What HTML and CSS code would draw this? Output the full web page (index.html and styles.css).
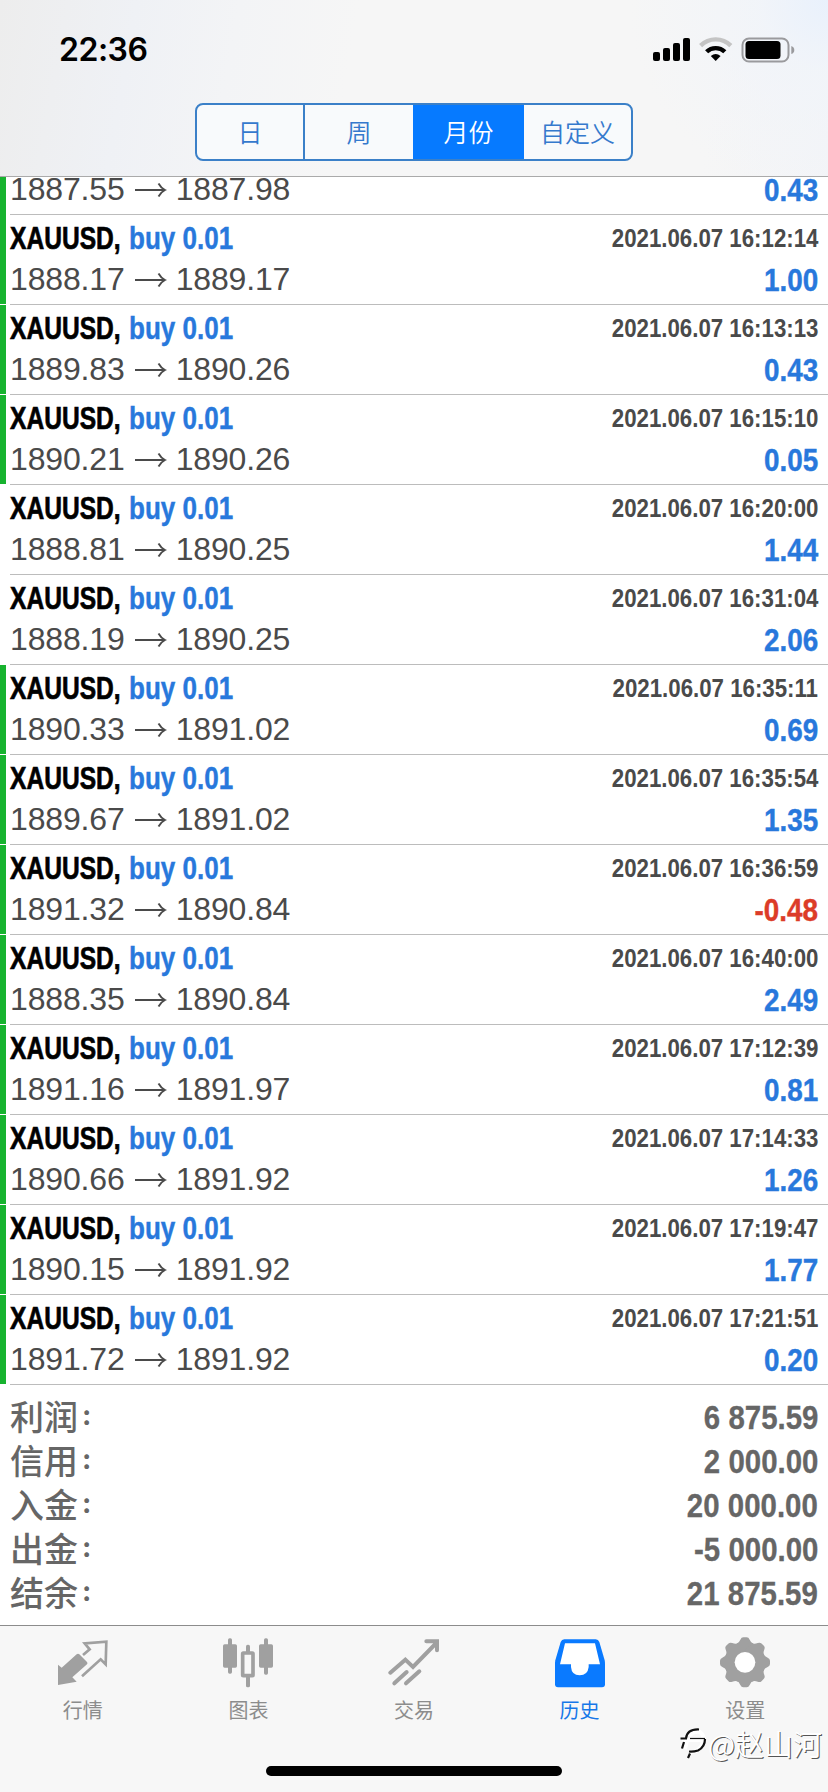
FILE: index.html
```html
<!DOCTYPE html>
<html lang="zh-CN">
<head>
<meta charset="utf-8">
<title>历史</title>
<link rel="stylesheet" href="styles.css">
</head>
<body>
<div class="screen">
  <header class="header">
    <div class="status">
      <span class="clock">22:36</span>
      <svg class="status-icons" width="142" height="26" viewBox="0 0 142 26">
        <rect x="0" y="15" width="7" height="9" rx="2"/>
        <rect x="10" y="11" width="7" height="13" rx="2"/>
        <rect x="20" y="6" width="7" height="18" rx="2"/>
        <rect x="30" y="1" width="7" height="23" rx="2"/>
        <g fill="none">
          <path d="M47.6 8.6 A21.5 21.5 0 0 1 77.8 8.6" stroke="#c4c4c4" stroke-width="4.4"/>
          <path d="M53.6 14.8 A13 13 0 0 1 71.8 14.8" stroke="#000" stroke-width="4.4"/>
        </g>
        <path d="M57.8 19 Q62.7 15.2 67.6 19 L62.7 24 Z"/>
        <rect x="89.5" y="1.5" width="46" height="23" rx="6.5" fill="none" stroke="#9a9a9d" stroke-width="2"/>
        <rect x="92.500" y="4" width="35" height="18" rx="3.500"/>
        <path d="M138.300 9 Q141.300 10 141.300 13 T138.300 17 Z" fill="#9a9a9d"/>
      </svg>
    </div>
    <nav class="segments">
      <span class="segment">日</span>
      <span class="segment">周</span>
      <span class="segment segment-on">月份</span>
      <span class="segment">自定义</span>
    </nav>
  </header>

  <svg class="defs" width="0" height="0">
    <symbol id="arrow" viewBox="0 0 32 16"><path d="M0 8H30M23.500 1.500Q26 6 30 8Q26 10 23.500 14.500" fill="none" stroke="#4a4a4a" stroke-width="1.900"/></symbol>
  </svg>

  <main class="deals">
    <div class="deal open deal-cut"><div class="line"><span class="prices">1887.55<svg class="arrow"><use href="#arrow"/></svg>1887.98</span><b class="value">0.43</b></div></div>
    <div class="deal open"><div class="line"><b class="symbol">XAUUSD,</b><b class="side">buy 0.01</b><b class="date">2021.06.07 16:12:14</b></div><div class="line"><span class="prices">1888.17<svg class="arrow"><use href="#arrow"/></svg>1889.17</span><b class="value">1.00</b></div></div>
    <div class="deal open"><div class="line"><b class="symbol">XAUUSD,</b><b class="side">buy 0.01</b><b class="date">2021.06.07 16:13:13</b></div><div class="line"><span class="prices">1889.83<svg class="arrow"><use href="#arrow"/></svg>1890.26</span><b class="value">0.43</b></div></div>
    <div class="deal open"><div class="line"><b class="symbol">XAUUSD,</b><b class="side">buy 0.01</b><b class="date">2021.06.07 16:15:10</b></div><div class="line"><span class="prices">1890.21<svg class="arrow"><use href="#arrow"/></svg>1890.26</span><b class="value">0.05</b></div></div>
    <div class="deal"><div class="line"><b class="symbol">XAUUSD,</b><b class="side">buy 0.01</b><b class="date">2021.06.07 16:20:00</b></div><div class="line"><span class="prices">1888.81<svg class="arrow"><use href="#arrow"/></svg>1890.25</span><b class="value">1.44</b></div></div>
    <div class="deal"><div class="line"><b class="symbol">XAUUSD,</b><b class="side">buy 0.01</b><b class="date">2021.06.07 16:31:04</b></div><div class="line"><span class="prices">1888.19<svg class="arrow"><use href="#arrow"/></svg>1890.25</span><b class="value">2.06</b></div></div>
    <div class="deal open"><div class="line"><b class="symbol">XAUUSD,</b><b class="side">buy 0.01</b><b class="date">2021.06.07 16:35:11</b></div><div class="line"><span class="prices">1890.33<svg class="arrow"><use href="#arrow"/></svg>1891.02</span><b class="value">0.69</b></div></div>
    <div class="deal open"><div class="line"><b class="symbol">XAUUSD,</b><b class="side">buy 0.01</b><b class="date">2021.06.07 16:35:54</b></div><div class="line"><span class="prices">1889.67<svg class="arrow"><use href="#arrow"/></svg>1891.02</span><b class="value">1.35</b></div></div>
    <div class="deal open"><div class="line"><b class="symbol">XAUUSD,</b><b class="side">buy 0.01</b><b class="date">2021.06.07 16:36:59</b></div><div class="line"><span class="prices">1891.32<svg class="arrow"><use href="#arrow"/></svg>1890.84</span><b class="value loss">-0.48</b></div></div>
    <div class="deal open"><div class="line"><b class="symbol">XAUUSD,</b><b class="side">buy 0.01</b><b class="date">2021.06.07 16:40:00</b></div><div class="line"><span class="prices">1888.35<svg class="arrow"><use href="#arrow"/></svg>1890.84</span><b class="value">2.49</b></div></div>
    <div class="deal open"><div class="line"><b class="symbol">XAUUSD,</b><b class="side">buy 0.01</b><b class="date">2021.06.07 17:12:39</b></div><div class="line"><span class="prices">1891.16<svg class="arrow"><use href="#arrow"/></svg>1891.97</span><b class="value">0.81</b></div></div>
    <div class="deal open"><div class="line"><b class="symbol">XAUUSD,</b><b class="side">buy 0.01</b><b class="date">2021.06.07 17:14:33</b></div><div class="line"><span class="prices">1890.66<svg class="arrow"><use href="#arrow"/></svg>1891.92</span><b class="value">1.26</b></div></div>
    <div class="deal open"><div class="line"><b class="symbol">XAUUSD,</b><b class="side">buy 0.01</b><b class="date">2021.06.07 17:19:47</b></div><div class="line"><span class="prices">1890.15<svg class="arrow"><use href="#arrow"/></svg>1891.92</span><b class="value">1.77</b></div></div>
    <div class="deal open"><div class="line"><b class="symbol">XAUUSD,</b><b class="side">buy 0.01</b><b class="date">2021.06.07 17:21:51</b></div><div class="line"><span class="prices">1891.72<svg class="arrow"><use href="#arrow"/></svg>1891.92</span><b class="value">0.20</b></div></div>
  </main>

  <section class="summary">
    <div class="total"><span class="label">利润<i class="colon">:</i></span><b class="amount">6 875.59</b></div>
    <div class="total"><span class="label">信用<i class="colon">:</i></span><b class="amount">2 000.00</b></div>
    <div class="total"><span class="label">入金<i class="colon">:</i></span><b class="amount">20 000.00</b></div>
    <div class="total"><span class="label">出金<i class="colon">:</i></span><b class="amount">-5 000.00</b></div>
    <div class="total"><span class="label">结余<i class="colon">:</i></span><b class="amount">21 875.59</b></div>
  </section>

  <footer class="tabs">
    <div class="tab">
      <svg class="icon" viewBox="0 0 156 156"><path d="M3 83L14 92L59 52Q63 48 67 52L90 75Q93 79 90 82L46 121L59 134L3 144Z" fill="#a0a0a0"/><path d="M78 54L98 37L83 19L148 14L146 82L131 67L75 118" fill="none" stroke="#a0a0a0" stroke-width="8"/></svg>
      <span>行情</span>
    </div>
    <div class="tab">
      <svg class="icon" viewBox="0 0 156 156"><g fill="#a0a0a0"><rect x="3" y="22" width="42" height="70" rx="5"/><rect x="18" y="4" width="12" height="106" rx="5"/><rect x="111" y="22" width="42" height="70" rx="5"/><rect x="126" y="4" width="12" height="109" rx="5"/><rect x="72" y="23" width="12" height="26" rx="5"/><rect x="72" y="116" width="12" height="35" rx="5"/></g><rect x="62" y="48" width="31" height="68" rx="2" fill="none" stroke="#a0a0a0" stroke-width="11"/></svg>
      <span>图表</span>
    </div>
    <div class="tab">
      <svg class="icon" viewBox="0 0 156 156"><g fill="none" stroke="#a0a0a0" stroke-width="12" stroke-linecap="round" stroke-linejoin="miter"><path d="M7 107L52 68L75 90L145 18M115 13H147V40"/><path d="M19 139L56 105M54 139L94 103"/></g></svg>
      <span>交易</span>
    </div>
    <div class="tab tab-on">
      <svg class="icon" viewBox="0 0 156 156"><path d="M31 7H125Q133 7 136 15L152 70Q153 75 153 80V142Q153 151 144 151H12Q3 151 3 142V80Q3 75 4 70L20 15Q23 7 31 7Z" fill="#0a7aff"/><path d="M33 19H123L138 82H104V90Q101 115 77 115T51 90V82H18Z" fill="#fff"/></svg>
      <span>历史</span>
    </div>
    <div class="tab">
      <svg class="icon" viewBox="0 0 156 156"><g transform="translate(78 76)"><g fill="#a0a0a0"><circle r="61"/><path id="tooth" d="M-25 -56Q-18 -58 -14 -68Q-11 -75 -5 -75H5Q11 -75 14 -68Q18 -58 25 -56V56Q18 58 14 68Q11 75 5 75H-5Q-11 75 -14 68Q-18 58 -25 56Z"/><use href="#tooth" transform="rotate(45)"/><use href="#tooth" transform="rotate(90)"/><use href="#tooth" transform="rotate(135)"/></g><circle r="31" fill="#fff"/></g></svg>
      <span>设置</span>
    </div>
    <div class="home"></div>
    <div class="mark">
      <svg width="28" height="32" viewBox="0 0 28 32"><g fill="none" stroke="#fff" stroke-width="4"><path d="M3 13H25M8 14L6 22M10 9Q14 4 21 5Q26 9 24 15Q22 24 11 26"/></g><g fill="none" stroke="#111"><path d="M1.500 11.500H7Q8 2 20 2.500M5 15L3 21.500M26 12Q26 20 19 23.500Q14 25 10 24.500M11 26.500L9 31" stroke-width="2.200"/><path d="M11 11.500H26" stroke-width="1.200"/></g></svg>
      <span>@赵山河</span>
    </div>
  </footer>
</div>
</body>
</html>
```
FILE: styles.css
```css
* { box-sizing: border-box; }
body { margin: 0; background: #fff; font-family: "Liberation Sans", "Noto Sans CJK SC", sans-serif; }
.screen { width: 828px; height: 1792px; display: flex; flex-direction: column; overflow: hidden; }
.defs { position: absolute; }

.header {
  height: 177px;
  flex: none;
  border-bottom: 1px solid #aaa;
  background:
    radial-gradient(circle at 100% 0, #e9f1fc 0, rgba(240, 244, 250, .7) 70px, rgba(246, 246, 246, 0) 200px),
    linear-gradient(100deg, #ededed 0, #eff1f5 16%, #f3f4f6 28%, #f6f6f6 42%, #f6f6f6 85%, #f3f4f7 100%);
}
.status { height: 103px; padding: 0 33px 0 59px; display: flex; justify-content: space-between; align-items: flex-start; }
.clock { font: 600 32px/40px Inter, sans-serif; letter-spacing: -.5px; padding-top: 30px; }
.status-icons { margin-top: 37px; }

.segments {
  width: 438px;
  height: 58px;
  margin-left: 195px;
  display: grid;
  grid-template-columns: 106px 110px 109px 1fr;
  border: 2px solid #3b80c8;
  border-radius: 8px;
  overflow: hidden;
  background: #f8fafc;
}
.segment { font: 350 25px/52px "Noto Sans CJK SC", sans-serif; text-align: center; color: #3579cd; border-left: 2px solid #3b80c8; }
.segment:first-child { border-left: 0; }
.segment-on { background: #067aff; color: #fff; border-color: #067aff; }
.segment-on + .segment { border-color: #067aff; }

.deals { flex: none; }
.deal {
  height: 90px;
  padding: 3px 10px 0;
  background: linear-gradient(#bcbcbc, #bcbcbc) 10px 100% / 828px 1px no-repeat;
}
.open {
  background: linear-gradient(#bcbcbc, #bcbcbc) 10px 100% / 828px 1px no-repeat, linear-gradient(#17b32f, #17b32f) 0 0 / 6px 89px no-repeat;
}
.deal-cut { height: 38px; padding: 0 10px; overflow: hidden; }
.deal-cut .line { margin-top: -8px; }
.line { height: 41px; display: flex; font-size: 32px; line-height: 41px; white-space: nowrap; }
.symbol { width: 119px; transform: scaleX(.768); transform-origin: 0 0; -webkit-text-stroke: .7px; }
.side { color: #2878dc; transform: scaleX(.813); transform-origin: 0 0; -webkit-text-stroke: .4px; }
.date { margin-left: auto; font-size: 26px; color: #4a4a4a; transform: scaleX(.856); transform-origin: 100% 0; }
.prices { display: flex; align-items: center; color: #4a4a4a; letter-spacing: -.15px; }
.arrow { width: 32px; height: 16px; margin: 0 9px 0 10px; }
.value { margin-left: auto; padding-top: 1px; color: #2878dc; transform: scaleX(.87); transform-origin: 100% 0; -webkit-text-stroke: .4px; }
.loss { color: #dc3c28; }

.summary { height: 240px; flex: none; padding: 9px 10px 0; color: #666; }
.total { height: 44px; display: flex; justify-content: space-between; line-height: 44px; }
.label { display: flex; font: 500 34px/44px "Noto Sans CJK SC", sans-serif; }
.colon { font: 700 28px/42px Inter, sans-serif; margin-left: 4px; }
.amount { font-size: 33px; padding-top: 2px; transform: scaleX(.892); transform-origin: 100% 0; -webkit-text-stroke: .3px; }

.tabs { position: relative; flex: 1; display: grid; grid-template-columns: repeat(5, 1fr); background: #f7f7f7; border-top: 1px solid #8c8c8c; }
.tab { display: flex; flex-direction: column; align-items: center; font: 400 20px/28px "Noto Sans CJK SC", sans-serif; color: #8c8c8c; }
.icon { width: 52px; height: 52px; margin: 11px 0 7px; }
.tab-on { color: #1677e8; }
.home { position: absolute; left: 266px; top: 140px; width: 296px; height: 10px; border-radius: 5px; background: #000; }
.mark { position: absolute; right: 6px; top: 97px; display: flex; align-items: center; gap: 1px; font: 350 29px/40px "Noto Sans CJK SC", sans-serif; color: #fff; text-shadow: 1px 1px 0 #555; }
```
